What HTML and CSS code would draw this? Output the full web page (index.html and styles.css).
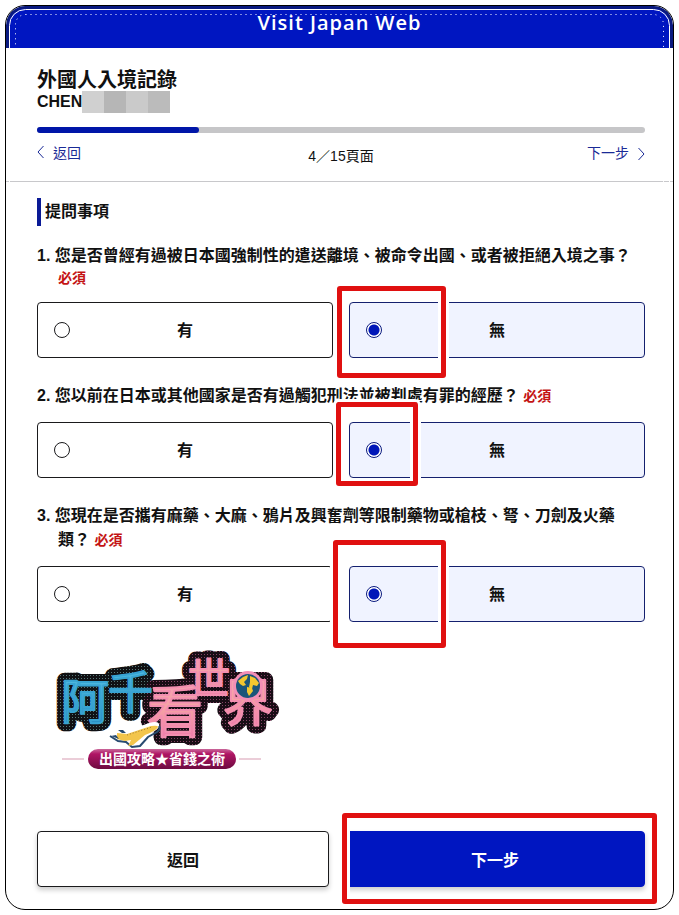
FILE: index.html
```html
<!DOCTYPE html>
<html lang="zh-Hant">
<head>
    <meta charset="UTF-8">
    <meta name="viewport" content="width=device-width, initial-scale=1.0">
    <title>Visit Japan Web</title>
    <link rel="stylesheet" href="styles.css">
</head>
<body>
    <div class="frame">
        <svg class="frame-lines" aria-hidden="true">
            <rect class="line-solid"/>
            <rect class="line-dots"/>
        </svg>
        <header class="site-header">Visit Japan Web</header>

        <div class="page-head">
            <h1>外國人入境記錄</h1>
            <div class="name-row">
                <span>CHEN</span>
                <span class="mosaic"><i></i><i></i><i></i><i></i></span>
            </div>
            <div class="progress"><div class="progress-bar"></div></div>
            <nav class="pager">
                <a href="#">
                    <svg width="7" height="14" viewBox="0 0 7 14"><path d="M6.5 0L1 6l5.5 6"/></svg>
                    返回
                </a>
                <p>4／15頁面</p>
                <a href="#" class="pager-next">
                    下一步
                    <svg width="7" height="14" viewBox="0 0 7 14"><path d="M.5 2L6 8l-5.5 6"/></svg>
                </a>
            </nav>
        </div>

        <form class="questions">
            <h2>提問事項</h2>

            <fieldset>
                <legend>1. 您是否曾經有過被日本國強制性的遣送離境、被命令出國、或者被拒絕入境之事？ <span class="required required-line">必須</span></legend>
                <div class="choices">
                    <label class="choice">
                        <input type="radio" name="q1" value="yes">
                        <span>有</span>
                    </label>
                    <label class="choice">
                        <input type="radio" name="q1" value="no" checked>
                        <span>無</span>
                        <i class="mark mark-1"></i>
                    </label>
                </div>
            </fieldset>

            <fieldset>
                <legend>2. 您以前在日本或其他國家是否有過觸犯刑法並被判處有罪的經歷？ <span class="required">必須</span></legend>
                <div class="choices">
                    <label class="choice">
                        <input type="radio" name="q2" value="yes">
                        <span>有</span>
                    </label>
                    <label class="choice">
                        <input type="radio" name="q2" value="no" checked>
                        <span>無</span>
                        <i class="mark mark-2"></i>
                    </label>
                </div>
            </fieldset>

            <fieldset>
                <legend>3. 您現在是否攜有麻藥、大麻、鴉片及興奮劑等限制藥物或槍枝、弩、刀劍及火藥類？ <span class="required">必須</span></legend>
                <div class="choices">
                    <label class="choice">
                        <input type="radio" name="q3" value="yes">
                        <span>有</span>
                    </label>
                    <label class="choice">
                        <input type="radio" name="q3" value="no" checked>
                        <span>無</span>
                        <i class="mark mark-3"></i>
                    </label>
                </div>
            </fieldset>

            <svg class="logo" width="230" height="125" viewBox="0 0 230 125">
                <defs>
                    <linearGradient id="blue" x1="0" y1="0" x2="0" y2="1">
                        <stop offset="0" stop-color="#5cc9ea"/>
                        <stop offset="1" stop-color="#2186bd"/>
                    </linearGradient>
                    <linearGradient id="pink" x1="0" y1="0" x2="0" y2="1">
                        <stop offset="0" stop-color="#f7a0c0"/>
                        <stop offset=".5" stop-color="#f5a3a4"/>
                        <stop offset="1" stop-color="#ee6fae"/>
                    </linearGradient>
                    <linearGradient id="ribbon" x1="0" y1="0" x2="0" y2="1">
                        <stop offset="0" stop-color="#c9679a"/>
                        <stop offset=".25" stop-color="#b01565"/>
                        <stop offset="1" stop-color="#6d0b40"/>
                    </linearGradient>
                    <pattern id="dots-blue" width="3" height="3" patternUnits="userSpaceOnUse">
                        <rect width="3" height="3" fill="#101114"/>
                        <circle cx="1.5" cy="1.5" r=".5" fill="#6d9a98"/>
                    </pattern>
                    <pattern id="dots-pink" width="3" height="3" patternUnits="userSpaceOnUse">
                        <rect width="3" height="3" fill="#180d15"/>
                        <circle cx="1.5" cy="1.5" r=".5" fill="#a8567f"/>
                    </pattern>
                    <g id="word-blue">
                        <text x="11" y="69" font-size="48">阿</text>
                        <text x="58" y="59" font-size="45">千</text>
                    </g>
                    <g id="word-pink">
                        <text x="97" y="82" font-size="56">看</text>
                        <text x="138" y="44" font-size="42">世</text>
                        <text x="173" y="71" font-size="50">界</text>
                    </g>
                </defs>
                <g class="logo-word">
                    <use href="#word-blue" class="edge" stroke="url(#dots-blue)"/>
                    <use href="#word-pink" class="edge" stroke="url(#dots-pink)"/>
                    <use href="#word-blue" class="face" fill="url(#blue)" stroke="#38a3d2"/>
                    <use href="#word-pink" class="face" fill="url(#pink)" stroke="#f38fb0"/>
                </g>
                <circle cx="198" cy="36" r="15" fill="#f38fb6"/>
                <circle cx="198" cy="36" r="12" fill="#1c5579"/>
                <path d="M188 31l5-4 5-2-1 4-3 3 2 3-3 1-3-2zM200 26l5 2 4 5-2 3-4-1-1 4-3-2 1-5zM197 37l5 1 1 3-4 5-2-4z" fill="#f4c72f"/>
                <path d="M59 86l6-7 12 2 22-8q12-3 10 4-3 5-15 9l-13 12-9-1-9-4-5-1z" fill="#fff"/>
                <path d="M60 86l8 5 8 1 6 5 8-1 8-9 9-5q4-3 2-6" fill="none" stroke="#284b70" stroke-width="2"/>
                <path d="M67 83l10 1 24-8q7-1 7 1-2 4-13 8L83 95l-5 1 3-6-6 1-8-2z" fill="#f3c54b"/>
                <path d="M61 86l5-1 3 4zM68 80l5 0 3 3-4 0z" fill="#284b70"/>
                <path d="M77 85l25-8" stroke="#9d7634" stroke-dasharray="1 2"/>
                <path d="M12 109h22M189 109h22" stroke="#d79bb1"/>
                <rect x="38" y="99" width="148" height="20" rx="10" fill="url(#ribbon)"/>
                <text class="logo-tagline" x="112" y="114" text-anchor="middle">出國攻略★省錢之術</text>
            </svg>

            <div class="actions">
                <button type="button" class="btn">返回</button>
                <div class="action-next">
                    <button type="submit" class="btn btn-primary">下一步</button>
                    <i class="mark mark-next"></i>
                </div>
            </div>
        </form>
    </div>
</body>
</html>
```

FILE: styles.css
```css
* {
    box-sizing: border-box;
}
body {
    margin: 0;
    padding: 5px;
    background-color: #fff;
    color: #111;
    font-family: "Liberation Sans", "Noto Sans CJK TC", sans-serif;
    font-size: 16px;
}
h1, h2, p {
    margin: 0;
}

/* outer frame */
.frame {
    position: relative;
    min-height: calc(100vh - 10px);
    border: 1px solid #000;
    border-radius: 20px;
    overflow: hidden;
}
.frame-lines {
    position: absolute;
    top: 0;
    left: 0;
    width: 100%;
    height: 100%;
    pointer-events: none;
}
.frame-lines rect {
    fill: none;
    stroke: #fff;
}
.line-solid {
    x: 3.5px;
    y: 3.5px;
    width: calc(100% - 7px);
    height: calc(100% - 7px);
    rx: 16px;
}
.line-dots {
    x: 9.5px;
    y: 8.5px;
    width: calc(100% - 19px);
    height: calc(100% - 17px);
    rx: 10px;
    stroke-dasharray: 1 4;
}
.site-header {
    height: 42px;
    border: 3px solid #0a1a80;
    border-bottom: 0;
    border-radius: 19px 19px 0 0;
    background-color: #0016c1;
    color: #fff;
    font-family: "Open Sans", "Noto Sans", sans-serif;
    font-size: 20px;
    font-weight: 600;
    line-height: 28px;
    text-align: center;
    letter-spacing: 1px;
}

/* title, progress and pager */
.page-head {
    padding: 21px 28px 15px 31px;
    border-bottom: 1px solid #c8c8cb;
}
h1 {
    font-size: 20px;
    font-weight: 700;
    line-height: 22px;
}
.name-row {
    display: flex;
    font-weight: 700;
    line-height: 22px;
}
.mosaic {
    display: flex;
}
.mosaic i {
    width: 22px;
    background-color: #d0d0d0;
}
.mosaic i:nth-child(2) {
    background-color: #b6b6b6;
}
.mosaic i:nth-child(3) {
    background-color: #cacaca;
}
.mosaic i:nth-child(4) {
    background-color: #bbb;
}
.progress {
    height: 6px;
    margin-top: 14px;
    border-radius: 3px;
    background-color: #c6c6c8;
}
.progress-bar {
    width: calc(100% * 4 / 15);
    height: 100%;
    border-radius: 3px;
    background-color: #0016a8;
}
.pager {
    display: grid;
    grid-template-columns: 1fr auto 1fr;
    align-items: start;
    margin-top: 10px;
    font-size: 14px;
    line-height: 20px;
}
.pager a {
    display: flex;
    align-items: center;
    gap: 9px;
    color: #1a2a96;
    text-decoration: none;
}
.pager .pager-next {
    justify-content: flex-end;
}
.pager svg {
    fill: none;
    stroke: #1a2a96;
}
.pager p {
    padding-top: 3px;
}

/* questions */
.questions {
    padding: 16px 28px 22px 31px;
}
h2 {
    margin-bottom: 18px;
    padding-left: 4px;
    border-left: 4px solid #0a1a96;
    font-size: 16px;
    line-height: 28px;
}
fieldset {
    min-width: 0;
    margin: 0 0 26px;
    padding: 0;
    border: 0;
}
legend {
    margin-bottom: 14px;
    padding: 0 0 0 21px;
    font-weight: 700;
    line-height: 24px;
    text-indent: -21px;
}
.required {
    color: #c41414;
    font-size: 14px;
}
.required-line {
    display: block;
    line-height: 20px;
    text-indent: 0;
}
.choices {
    display: grid;
    grid-template-columns: 1fr 1fr;
    gap: 16px;
}
.choice {
    position: relative;
    display: flex;
    align-items: center;
    height: 56px;
    padding: 0 16px;
    border: 1px solid #1a1a1c;
    border-radius: 4px;
    font-weight: 700;
    cursor: pointer;
}
.choice span {
    flex: 1;
    padding: 0 16px 2px 0;
    text-align: center;
}
.choice:has(input:checked) {
    border-color: #14206e;
    background-color: #f0f3ff;
}
.choice input {
    appearance: none;
    width: 16px;
    height: 16px;
    margin: 0;
    border: 1px solid #1a1a1c;
    border-radius: 50%;
    background-color: #fff;
}
.choice input:checked {
    border-color: #0a1a80;
    background-image: radial-gradient(circle, #0016b8 5px, transparent 6px);
}

/* red marks over the fields */
.mark {
    position: absolute;
    z-index: 1;
    border: 5px solid #e01010;
    border-radius: 3px;
    box-shadow: 0 0 0 3px #fff, inset 0 0 0 3px #fff;
    pointer-events: none;
}
.mark-1 {
    top: -17px;
    left: -13px;
    width: 109px;
    height: 92px;
}
.mark-2 {
    top: -21px;
    left: -14px;
    width: 82px;
    height: 84px;
}
.mark-3 {
    top: -27px;
    left: -17px;
    width: 113px;
    height: 108px;
}
.mark-next {
    top: -18px;
    right: -12px;
    bottom: -17px;
    left: -3px;
}

/* logo */
.logo {
    display: block;
    margin: 28px 0 56px 13px;
}
.logo-word {
    font-family: "Noto Sans CJK TC", sans-serif;
    font-weight: 400;
    stroke-linejoin: round;
}
.logo-word .edge {
    stroke-width: 16px;
}
.logo-word .face {
    stroke-width: 2px;
}
.logo-tagline {
    fill: #fff;
    font-family: "Noto Sans CJK TC", sans-serif;
    font-size: 14px;
    font-weight: 700;
}

/* bottom buttons */
.actions {
    display: grid;
    grid-template-columns: 292fr 300fr;
    gap: 16px;
}
.action-next {
    position: relative;
}
.btn {
    width: 100%;
    height: 56px;
    border: 1px solid #1a1a1c;
    border-radius: 4px;
    background-color: #fff;
    box-shadow: 0 3px 5px rgba(0, 0, 0, 0.2);
    color: #111;
    font: inherit;
    font-weight: 700;
    cursor: pointer;
}
.btn-primary {
    border-color: #0016c1;
    background-color: #0016c1;
    color: #fff;
}
```
